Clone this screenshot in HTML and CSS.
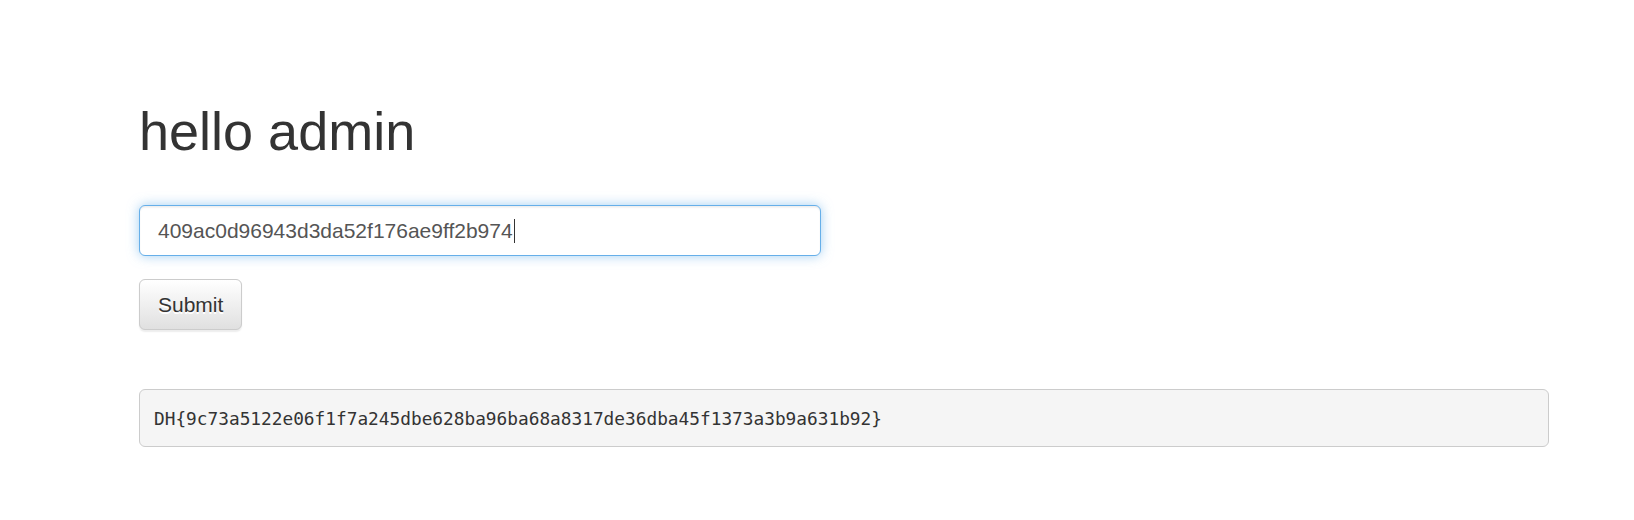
FILE: index.html
```html
<!DOCTYPE html>
<html>
<head>
<meta charset="utf-8">
<title>hello admin</title>
<link rel="stylesheet" href="styles.css">
</head>
<body>
<div class="container">
  <h1 class="title">hello admin</h1>
  <form class="login-form">
    <div class="form-group">
      <div class="form-control focus"><span class="value">409ac0d96943d3da52f176ae9ff2b974</span><span class="caret"></span></div>
    </div>
    <button type="button" class="btn">Submit</button>
  </form>
  <pre class="flag">DH{9c73a5122e06f1f7a245dbe628ba96ba68a8317de36dba45f1373a3b9a631b92}</pre>
</div>
</body>
</html>
```
FILE: styles.css
```css
html, body {
  margin: 0;
  padding: 0;
  background: #fff;
}
body {
  font-family: "Liberation Sans", Arial, sans-serif;
  color: #333;
}
.container {
  padding: 102px 0 0 139px;
  width: 1409px;
}
.title {
  margin: 0;
  font-size: 54px;
  font-weight: 400;
  line-height: 59px;
  color: #333;
}
.login-form {
  margin-top: 44px;
}
.form-group {
  margin-bottom: 23px;
}
.form-control {
  box-sizing: border-box;
  width: 682px;
  height: 51px;
  padding: 9px 18px;
  font-size: 21px;
  line-height: 30px;
  color: #555;
  background: #fff;
  border: 1.5px solid #66afe9;
  border-radius: 6px;
  box-shadow: inset 0 1.5px 1.5px rgba(0,0,0,.075), 0 0 12px rgba(102,175,233,.6);
  display: flex;
  align-items: center;
}
.caret {
  display: inline-block;
  width: 1px;
  height: 24px;
  background: #333;
  margin-left: 1px;
}
.btn {
  display: block;
  box-sizing: border-box;
  height: 51px;
  padding: 9px 18px;
  font-family: "Liberation Sans", Arial, sans-serif;
  font-size: 21px;
  line-height: 30px;
  color: #333;
  background-color: #e0e0e0;
  background-image: linear-gradient(to bottom, #fff 0, #e0e0e0 100%);
  border: 1.5px solid #ccc;
  border-radius: 6px;
  text-shadow: 0 1.5px 0 #fff;
  box-shadow: inset 0 1.5px 0 rgba(255,255,255,.15), 0 1.5px 1.5px rgba(0,0,0,.075);
  cursor: pointer;
}
.flag {
  box-sizing: border-box;
  margin: 59px 0 0 0;
  width: 1410px;
  padding: 15px 14px 13px;
  font-family: "DejaVu Sans Mono", "Liberation Mono", monospace;
  font-size: 17.8px;
  line-height: 28px;
  color: #333;
  background: #f5f5f5;
  border: 1.5px solid #ccc;
  border-radius: 6px;
  white-space: pre;
}
```
